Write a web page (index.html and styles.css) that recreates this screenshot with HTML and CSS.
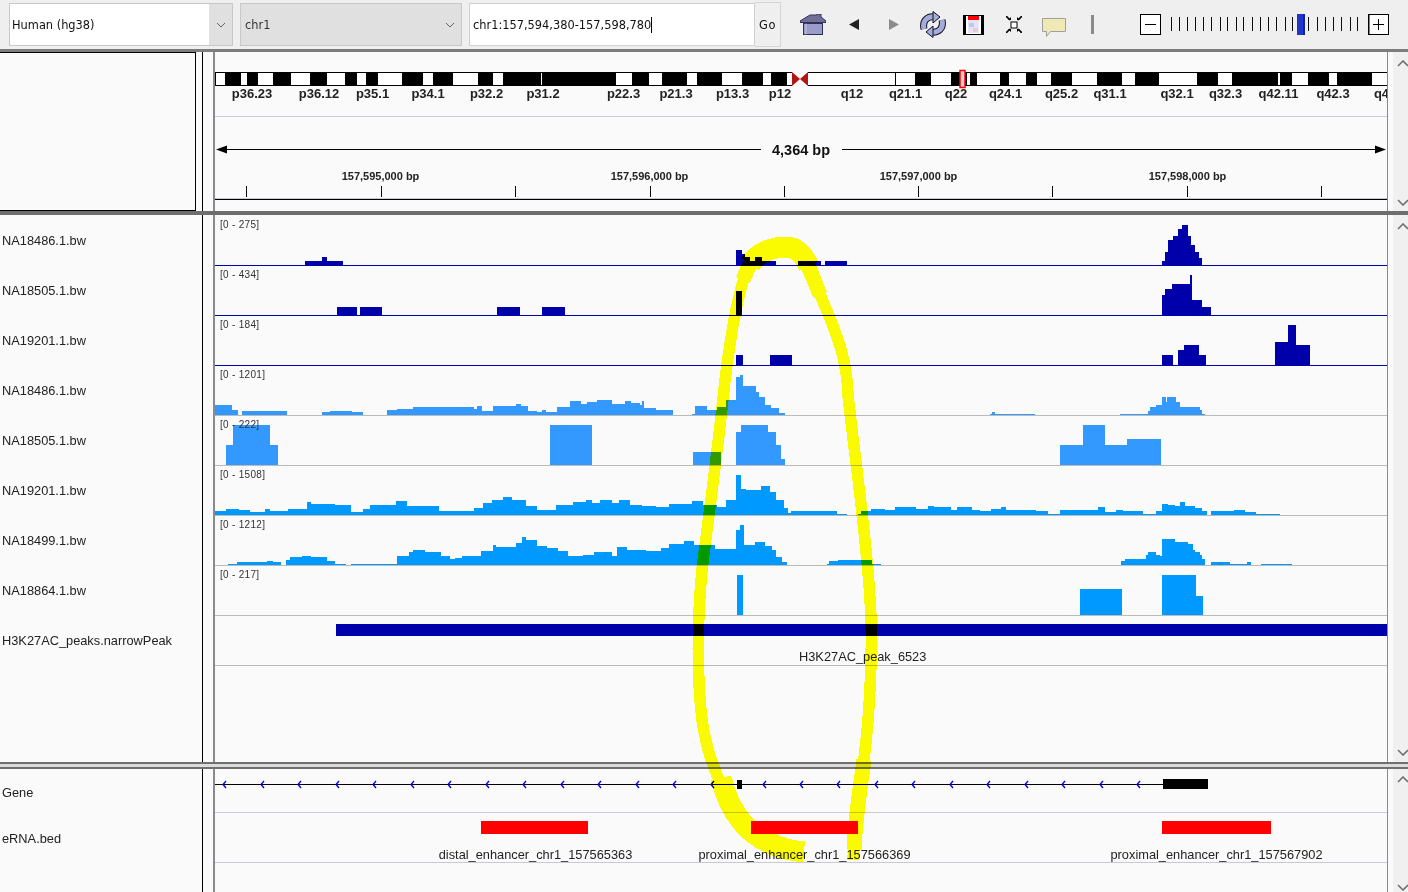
FILE: index.html
```html
<!DOCTYPE html>
<html lang="en">
<head>
    <meta charset="UTF-8">
    <title>IGV</title>
    <link rel="stylesheet" href="styles.css">
</head>
<body>
    <div class="toolbar">
        <div class="combo genome"><span class="combo-text">Human (hg38)</span><span class="combo-arrow"><svg width="10" height="6" viewBox="0 0 10 6"><path d="M1 1L5 5L9 1" class="caret"/></svg></span></div>
        <div class="combo chrom"><span class="combo-text">chr1</span><span class="combo-arrow"><svg width="10" height="6" viewBox="0 0 10 6"><path d="M1 1L5 5L9 1" class="caret"/></svg></span></div>
        <div class="locus"><span class="locus-text">chr1:157,594,380-157,598,780</span></div>
        <div class="go">Go</div>

        <svg class="icon home" width="26" height="21" viewBox="0 0 26 21">
            <path d="M0 7L10 1H17V0H21V3L26 7V8.500H0Z" fill="#6f6f98" stroke="#33335a"/>
            <rect x="3.500" y="9.500" width="19" height="11" fill="#9c9cc8" stroke="#2e2e56"/>
            <path d="M6 9.500V20.500" stroke="#c4c4e0"/>
        </svg>
        <svg class="icon back" width="10" height="11" viewBox="0 0 10 11"><path d="M0 5.500L10 0V11Z" fill="#222"/></svg>
        <svg class="icon forward" width="10" height="11" viewBox="0 0 10 11"><path d="M10 5.500L0 0V11Z" fill="#8c8c8c"/></svg>
        <svg class="icon refresh" width="26" height="27" viewBox="0 0 26 27">
            <path d="M4 18C2 9 8 5 15 6" fill="none" stroke="#112" stroke-width="7"/>
            <path d="M22 9C24 18 18 22 11 21" fill="none" stroke="#112" stroke-width="7"/>
            <path d="M4 18C2 9 8 5 15 6" fill="none" stroke="#a4acdc" stroke-width="5"/>
            <path d="M22 9C24 18 18 22 11 21" fill="none" stroke="#a4acdc" stroke-width="5"/>
            <path d="M13 .5L20 6L13 12Z" fill="#a4acdc" stroke="#112"/>
            <path d="M13 15L6 21L13 26.500Z" fill="#a4acdc" stroke="#112"/>
        </svg>
        <svg class="icon region" width="21" height="20" viewBox="0 0 21 20">
            <rect width="21" height="20" fill="#000"/>
            <rect x="3" y="1" width="15" height="18" fill="#fff"/>
            <rect x="5" y="5" width="11" height="13" fill="#e4e4f6"/>
            <rect x="6" y="8" width="5" height="4" fill="#c0c6f0"/>
            <rect x="10" y="13" width="5" height="4" fill="#f0c8d4"/>
            <rect x="5" y="1" width="11" height="4" fill="#f00"/>
        </svg>
        <svg class="icon fit" width="16" height="17" viewBox="0 0 16 17">
            <rect x="5" y="6" width="6" height="6" fill="#fff" stroke="#000"/>
            <path d="M0 0L4 4M16 0L12 4M0 17L4 13M16 17L12 13" stroke="#000" stroke-width="1.600"/>
            <path d="M2 4H5V1ZM14 4H11V1ZM2 13H5V16ZM14 13H11V16Z" fill="#000"/>
        </svg>
        <svg class="icon bubble" width="24" height="19" viewBox="0 0 24 19">
            <path d="M.5 .5H23.500V13.500H8.500L4.500 18.500V13.500H.5Z" fill="#efe9b5" stroke="#a0a0a0"/>
        </svg>
        <span class="sep"></span>

        <svg class="zoom-btn" width="21" height="21" viewBox="0 0 21 21">
            <rect x=".5" y=".5" width="20" height="20" fill="#fff" stroke="#000"/>
            <path d="M5 10.500H16" stroke="#000"/>
        </svg>
        <svg class="slider" width="207" height="21" viewBox="1161 0 207 21">
            <path d="M1171.500 3V17M1179.500 3V17M1187.500 3V17M1195.500 3V17M1203.500 3V17M1211.500 3V17M1220.500 3V17M1227.500 3V17M1236.500 3V17M1243.500 3V17M1252.500 3V17M1260.500 3V17M1268.500 3V17M1276.500 3V17M1285.500 3V17M1292.500 3V17M1308.500 3V17M1317.500 3V17M1325.500 3V17M1333.500 3V17M1341.500 3V17M1350.500 3V17M1357.500 3V17" stroke="#111"/>
            <rect x="1297" y="0" width="8" height="21" fill="#1f35cc"/>
            <rect x="1303" y="0" width="2" height="21" fill="#14229a"/>
        </svg>
        <svg class="zoom-btn" width="21" height="21" viewBox="0 0 21 21">
            <rect x="1" y=".5" width="19.500" height="20" fill="#fff" stroke="#000"/>
            <path d="M0 0V21" stroke="#000" stroke-width="2"/>
            <path d="M5 10.500H16M10.500 5V16" stroke="#000"/>
        </svg>
    </div>

    <div class="panel top-panel">
        <div class="names"><div class="name-box"></div></div>
        <div class="gutter"></div>
        <div class="data">
            <svg class="cyto" width="1172" height="64" viewBox="215 52 1172 64">
                <rect x="215" y="72" width="577" height="14" fill="#000"/>
                <rect x="808" y="72" width="579" height="14" fill="#000"/>
                <g fill="#fff">
                    <rect x="216" y="73" width="9" height="12"/><rect x="241" y="73" width="6" height="12"/>
                    <rect x="258" y="73" width="15" height="12"/><rect x="291" y="73" width="19" height="12"/>
                    <rect x="327" y="73" width="18" height="12"/><rect x="357" y="73" width="9" height="12"/>
                    <rect x="378" y="73" width="24" height="12"/><rect x="423" y="73" width="10" height="12"/>
                    <rect x="453" y="73" width="25" height="12"/><rect x="493" y="73" width="10" height="12"/>
                    <rect x="541" y="73" width="1" height="12"/><rect x="616" y="73" width="16" height="12"/>
                    <rect x="649" y="73" width="13" height="12"/><rect x="687" y="73" width="10" height="12"/>
                    <rect x="722" y="73" width="20" height="12"/><rect x="763" y="73" width="8" height="12"/>
                    <rect x="787" y="73" width="5" height="12"/>
                    <rect x="808" y="73" width="87" height="12"/><rect x="896" y="73" width="19" height="12"/>
                    <rect x="931" y="73" width="20" height="12"/><rect x="967" y="73" width="3" height="12"/>
                    <rect x="977" y="73" width="23" height="12"/><rect x="1009" y="73" width="17" height="12"/>
                    <rect x="1037" y="73" width="14" height="12"/><rect x="1072" y="73" width="25" height="12"/>
                    <rect x="1122" y="73" width="13" height="12"/><rect x="1159" y="73" width="38" height="12"/>
                    <rect x="1218" y="73" width="14" height="12"/><rect x="1278" y="73" width="2" height="12"/>
                    <rect x="1292" y="73" width="16" height="12"/><rect x="1329" y="73" width="8" height="12"/>
                    <rect x="1372" y="73" width="15" height="12"/>
                </g>
                <path d="M792 72L800 79L792 86Z" fill="#b41414"/>
                <path d="M808 72L800 79L808 86Z" fill="#b41414"/>
                <rect x="960" y="70.500" width="5" height="17" fill="#f6d0d0" stroke="#f00" stroke-width="1.500"/>
                <g class="cyto-label">
                    <text x="252" y="98">p36.23</text><text x="319" y="98">p36.12</text><text x="372.500" y="98">p35.1</text>
                    <text x="428" y="98">p34.1</text><text x="486.500" y="98">p32.2</text><text x="543" y="98">p31.2</text>
                    <text x="623.500" y="98">p22.3</text><text x="676" y="98">p21.3</text><text x="732.500" y="98">p13.3</text>
                    <text x="780" y="98">p12</text><text x="852" y="98">q12</text><text x="905.500" y="98">q21.1</text>
                    <text x="956" y="98">q22</text><text x="1005.500" y="98">q24.1</text><text x="1061.500" y="98">q25.2</text>
                    <text x="1110" y="98">q31.1</text><text x="1177" y="98">q32.1</text><text x="1225.500" y="98">q32.3</text>
                    <text x="1278.500" y="98">q42.11</text><text x="1333" y="98">q42.3</text><text x="1381.500" y="98">q4</text>
                </g>
            </svg>
            <svg class="ruler" width="1172" height="81" viewBox="215 117 1172 81">
                <path d="M226 149.500H761M842 149.500H1376" stroke="#000"/>
                <path d="M216 149.500L227 145.500V153.500Z" fill="#000"/>
                <path d="M1386 149.500L1375 145.500V153.500Z" fill="#000"/>
                <text class="span-label" x="801" y="155">4,364 bp</text>
                <g class="tick-label">
                    <text x="380.500" y="180">157,595,000 bp</text><text x="649.500" y="180">157,596,000 bp</text>
                    <text x="918.500" y="180">157,597,000 bp</text><text x="1187.500" y="180">157,598,000 bp</text>
                </g>
                <path d="M246.500 186V197M381.500 186V197M515.500 186V197M650.500 186V197M784.500 186V197M918.500 186V197M1052.500 186V197M1187.500 186V197M1321.500 186V197" stroke="#000"/>
            </svg>
            <div class="ruler-foot"></div>
        </div>
        <div class="scroll">
            <svg class="chev" width="12" height="7" viewBox="0 0 12 7"><path d="M1 6L6 1L11 6"/></svg>
            <svg class="chev" width="12" height="7" viewBox="0 0 12 7"><path d="M1 1L6 6L11 1"/></svg>
        </div>
    </div>

    <div class="hsplit"></div>

    <div class="panel mid-panel">
        <div class="names">
            <div class="name">NA18486.1.bw</div>
            <div class="name">NA18505.1.bw</div>
            <div class="name">NA19201.1.bw</div>
            <div class="name">NA18486.1.bw</div>
            <div class="name">NA18505.1.bw</div>
            <div class="name">NA19201.1.bw</div>
            <div class="name">NA18499.1.bw</div>
            <div class="name">NA18864.1.bw</div>
            <div class="name">H3K27AC_peaks.narrowPeak</div>
        </div>
        <div class="gutter"></div>
        <div class="data">
            <div class="track navy">
                <span class="range">[0 - 275]</span>
                <svg width="1172" height="49" viewBox="215 216 1172 49">
                    <path class="dark" d="M305 265V261H322V257H327V261H343V265ZM736 265V250H742V254H745V257H750V261H755V257H762V261H776V265ZM798 265V261H821V265ZM825 265V261H847V265ZM1162 265V261H1165V252H1168V240H1173V236H1178V229H1182V225H1188V236H1191V245H1195V252H1199V258H1202V265Z"/>
                </svg>
            </div>
            <div class="track navy">
                <span class="range">[0 - 434]</span>
                <svg width="1172" height="49" viewBox="215 266 1172 49">
                    <path class="dark" d="M337 315V307H357V315ZM360 315V307H382V315ZM497 315V307H520V315ZM542 315V307H565V315ZM736 315V291H742V315ZM1162 315V295H1165V289H1172V284H1190V275H1192V300H1202V307H1211V315Z"/>
                </svg>
            </div>
            <div class="track navy">
                <span class="range">[0 - 184]</span>
                <svg width="1172" height="49" viewBox="215 316 1172 49">
                    <path class="dark" d="M736 365V355H743V365ZM770 365V355H792V365ZM1162 365V355H1173V365ZM1178 365V350H1184V345H1199V355H1206V365ZM1275 365V342H1288V325H1296V345H1310V365Z"/>
                </svg>
            </div>
            <div class="track">
                <span class="range">[0 - 1201]</span>
                <svg width="1172" height="49" viewBox="215 366 1172 49">
                    <path class="sky" d="M215 415V405H232V410H238V415ZM242 415V411H287V415ZM322 415V412H330V411H352V412H363V415ZM387 415V410H397V409H413V407H432V407H474V409H477V406H482V411H493V406H516V404H521V406H528V411H537V412H542V410H546V412H552V412H557V407H570V401H581V404H587V402H597V400H612V404H625V401H631V403H640V405H642V401H644V408H656V410H673V415ZM692 415V414H695V406H707V410H717V407H726V400H736V377H740V375H743V386H756V392H759V397H765V405H771V408H779V413H785V415ZM990 415V414H992V412H995V414H1035V415ZM1120 415V414H1148V411H1150V407H1156V405H1162V397H1166V402H1167V397H1176V402H1180V407H1200V410H1202V414H1205V415Z"/>
                </svg>
            </div>
            <div class="track">
                <span class="range">[0 - 222]</span>
                <svg width="1172" height="49" viewBox="215 416 1172 49">
                    <path class="sky" d="M226 465V445H233V425H270V445H278V465ZM550 465V425H592V465ZM693 465V452H721V465ZM736 465V432H741V425H768V432H776V445H781V459H785V465ZM1060 465V445H1083V425H1105V445H1127V439H1161V465Z"/>
                </svg>
            </div>
            <div class="track">
                <span class="range">[0 - 1508]</span>
                <svg width="1172" height="49" viewBox="215 466 1172 49">
                    <path class="blue" d="M215 515V511H226V509H239V510H250V512H265V509H270V511H288V509H307V502H311V504H335V505H351V512H363V509H370V505H396V501H407V506H439V511H474V508H483V503H492V500H503V497H512V500H526V506H537V510H556V505H573V502H586V500H592V503H600V500H612V503H619V500H630V505H642V506H656V507H669V504H692V501H703V505H717V507H726V500H736V475H741V489H746V490H761V486H770V492H776V500H784V508H788V513H791V511H811V511H837V514H847V515ZM858 515V514H861V511H871V509H885V510H895V507H901V507H916V509H928V506H934V507H951V510H957V507H972V510H980V511H991V509H1001V507H1006V510H1036V511H1048V514H1060V510H1098V507H1105V512H1116V510H1123V511H1143V514H1156V511H1162V504H1168V505H1175V506H1180V502H1185V506H1195V508H1202V511H1207V515ZM1211 515V511H1234V510H1245V512H1256V514H1280V515Z"/>
                </svg>
            </div>
            <div class="track">
                <span class="range">[0 - 1212]</span>
                <svg width="1172" height="49" viewBox="215 516 1172 49">
                    <path class="blue" d="M228 565V564H237V562H267V561H273V562H281V565ZM286 565V560H290V557H302V556H311V557H327V561H335V564H346V565ZM351 565V564H380V564H397V561H397V556H409V552H413V550H425V552H441V556H450V559H455V558H462V556H481V551H493V545H496V547H516V543H522V537H526V540H537V546H547V548H558V551H568V556H583V555H594V552H612V556H617V547H627V550H646V551H661V548H669V544H684V541H694V545H715V549H736V530H740V525H744V545H755V542H765V546H772V550H776V557H782V562H787V565ZM827 565V564H829V561H838V560H872V564H881V565ZM1121 565V561H1125V559H1146V555H1148V552H1156V555H1160V556H1162V539H1175V542H1188V544H1193V550H1195V552H1200V555H1202V559H1205V565ZM1211 565V562H1230V564H1247V562H1251V565ZM1261 565V564H1292V565Z"/>
                </svg>
            </div>
            <div class="track">
                <span class="range">[0 - 217]</span>
                <svg width="1172" height="49" viewBox="215 566 1172 49">
                    <path class="blue" d="M737 615V575H743V615ZM1080 615V589H1122V615ZM1162 615V575H1196V596H1203V615Z"/>
                </svg>
            </div>
            <div class="track peak">
                <div class="peak-bar"></div>
                <div class="feature-label">H3K27AC_peak_6523</div>
            </div>
        </div>
        <div class="scroll">
            <svg class="chev" width="12" height="7" viewBox="0 0 12 7"><path d="M1 6L6 1L11 6"/></svg>
            <svg class="chev" width="12" height="7" viewBox="0 0 12 7"><path d="M1 1L6 6L11 1"/></svg>
        </div>
    </div>

    <div class="hsplit double"></div>

    <div class="panel bottom-panel">
        <div class="names">
            <div class="name gene-name">Gene</div>
            <div class="name">eRNA.bed</div>
        </div>
        <div class="gutter"></div>
        <div class="data">
            <div class="track gene-track">
                <svg width="1172" height="42" viewBox="215 770 1172 42">
                    <path d="M215 784.500H1163" stroke="#000"/>
                    <path class="strand" d="M226 781L223 784.500L226 788M264 781L261 784.500L264 788M301 781L298 784.500L301 788M339 781L336 784.500L339 788M376 781L373 784.500L376 788M414 781L411 784.500L414 788M451 781L448 784.500L451 788M489 781L486 784.500L489 788M526 781L523 784.500L526 788M564 781L561 784.500L564 788M601 781L598 784.500L601 788M639 781L636 784.500L639 788M676 781L673 784.500L676 788M714 781L711 784.500L714 788M766 781L763 784.500L766 788M803 781L800 784.500L803 788M840 781L837 784.500L840 788M878 781L875 784.500L878 788M915 781L912 784.500L915 788M953 781L950 784.500L953 788M990 781L987 784.500L990 788M1028 781L1025 784.500L1028 788M1065 781L1062 784.500L1065 788M1103 781L1100 784.500L1103 788M1140 781L1137 784.500L1140 788"/>
                    <rect x="737" y="780" width="5" height="9" fill="#000"/>
                    <rect x="1163" y="779" width="45" height="10" fill="#000"/>
                </svg>
            </div>
            <div class="track bed-track">
                <svg width="1172" height="49" viewBox="215 813 1172 49">
                    <rect x="481" y="821" width="107" height="13" fill="#f00"/>
                    <rect x="751" y="821" width="107" height="13" fill="#f00"/>
                    <rect x="1162" y="821" width="109" height="13" fill="#f00"/>
                    <g class="bed-label">
                        <text x="535.500" y="859">distal_enhancer_chr1_157565363</text>
                        <text x="804.500" y="859">proximal_enhancer_chr1_157566369</text>
                        <text x="1216.500" y="859">proximal_enhancer_chr1_157567902</text>
                    </g>
                </svg>
            </div>
        </div>
        <div class="scroll">
            <svg class="chev" width="12" height="7" viewBox="0 0 12 7"><path d="M1 6L6 1L11 6"/></svg>
            <svg class="chev" width="12" height="7" viewBox="0 0 12 7"><path d="M1 1L6 6L11 1"/></svg>
        </div>
    </div>

    <!-- hand drawn highlight, sits on top of everything -->
    <svg class="scribble" width="1408" height="892" viewBox="0 0 1408 892">
        <path class="pen" d="M853 860C855 820 864 770 868 720C871 680 873 640 870 600C867 540 855 460 848 395C847 350 830 320 812 275C803 252 795 247 786 247C770 247 755 255 748 268C738 290 730 340 725 380C718 450 708 520 702 570C697 620 697 680 702 720C708 760 718 775 725 795"/>
        <path class="pen mid" d="M820 295L812 275C803 252 795 247 786 247C770 247 755 255 748 268L743 280"/>
        <path class="pen thick" d="M809 266C802 252 795 247 786 247C770 247 757 254 750 264"/>
        <path class="pen thick" d="M721 778C730 815 750 835 770 843C780 848 792 851 804 852"/>
        <path class="pen mid" d="M854 850C855 820 860 790 864 760"/>
    </svg>
</body>
</html>
```

FILE: styles.css
```css
* {
    box-sizing: border-box;
}

body {
    margin: 0;
    width: 1408px;
    height: 892px;
    overflow: hidden;
    position: relative;
    background-color: #fafafa;
    font-family: "Liberation Sans", Arial, sans-serif;
    color: #222;
}

svg {
    display: block;
}

/* toolbar */
.toolbar {
    display: flex;
    align-items: center;
    height: 52px;
    padding-left: 9px;
    background-color: #efefef;
    border-bottom: 3px solid #7d7d7d;
    font-family: "DejaVu Sans", sans-serif;
    font-size: 11.4px;
    color: #111;
}

.combo {
    display: flex;
    align-items: center;
    height: 43px;
    background-color: #e0e0e0;
    border: 1px solid #c8c8c8;
    margin-right: 7px;
}

.genome {
    width: 224px;
}

.chrom {
    width: 222px;
    color: #333;
}

.combo-text {
    flex: 1;
    align-self: stretch;
    display: flex;
    align-items: center;
    padding-left: 4px;
}

.genome .combo-text {
    background-color: #fff;
    padding-left: 2px;
}

.combo-arrow {
    width: 23px;
    display: flex;
    justify-content: center;
}

.caret {
    fill: none;
    stroke: #666;
}

.locus {
    display: flex;
    align-items: center;
    width: 286px;
    height: 43px;
    padding-left: 3px;
    background-color: #fff;
    border: 1px solid #d0d0d0;
}

.locus-text {
    border-right: 1px solid #000;
    line-height: 16px;
}

.go {
    width: 26px;
    height: 45px;
    line-height: 45px;
    text-align: center;
    letter-spacing: 0.5px;
    border: 1px solid #d4d4d4;
    border-left: none;
}

.icon {
    flex: none;
}

.home { margin-left: 19px; }
.back { margin-left: 23px; }
.forward { margin-left: 30px; }
.refresh { margin-left: 21px; }
.region { margin-left: 17px; }
.fit { margin-left: 22px; }
.bubble { margin-left: 20px; margin-top: 6px; }

.sep {
    width: 3px;
    height: 19px;
    margin-left: 25px;
    margin-right: 46px;
    background-color: #8a8a8a;
}

/* panels */
.panel {
    display: flex;
}

.top-panel {
    height: 159px;
}

.mid-panel {
    height: 547px;
}

.bottom-panel {
    height: 123px;
}

.names {
    width: 203px;
    flex: none;
    border-right: 1px solid #000;
}

.name-box {
    width: 196px;
    height: 100%;
    border: 1px solid #000;
    border-left: none;
}

.gutter {
    width: 10px;
    flex: none;
}

.data {
    width: 1175px;
    flex: none;
    border-left: 2px solid #8a8a8a;
    border-right: 1px solid #8a8a8a;
}

.scroll {
    width: 20px;
    flex: none;
    display: flex;
    flex-direction: column;
    justify-content: space-between;
    align-items: center;
    padding-left: 10px;
    background: linear-gradient(to right, #fafafa 5px, #f0f0f0 5px);
}

.chev {
    fill: none;
    stroke: #707070;
    stroke-width: 1.6;
}

.top-panel .scroll {
    padding-top: 8px;
    padding-bottom: 5px;
}

.mid-panel .scroll {
    padding-top: 8px;
    padding-bottom: 6px;
}

.bottom-panel .scroll {
    padding-top: 7px;
    padding-bottom: 1px;
}

.hsplit {
    height: 4px;
    background-color: #6e6e6e;
}

.hsplit.double {
    height: 7px;
    background: linear-gradient(to bottom, #707070 2px, #dcdcdc 2px, #dcdcdc 5px, #707070 5px);
}

/* top panel contents */
.top-panel .data {
    display: flex;
    flex-direction: column;
    background: linear-gradient(to bottom, transparent 64px, #c8c8d8 64px, #c8c8d8 65px, transparent 65px, transparent 146px, #c8c8d8 146px, #c8c8d8 147px, transparent 147px);
}

.cyto-label text {
    font-size: 13px;
    font-weight: bold;
    text-anchor: middle;
    fill: #222;
}

.ruler {
    margin-top: 1px;
    flex: none;
}

.span-label {
    font-size: 14.5px;
    font-weight: bold;
    text-anchor: middle;
    fill: #111;
}

.tick-label text {
    font-size: 11px;
    font-weight: bold;
    text-anchor: middle;
    fill: #222;
}

.ruler-foot {
    flex: 1;
    margin-top: 1px;
    border-top: 1px solid #000;
}

/* tracks */
.mid-panel .names,
.bottom-panel .names {
    padding-left: 2px;
    font-size: 12.8px;
}

.bottom-panel .names {
    padding-top: 1px;
}

.name {
    display: flex;
    align-items: center;
    height: 50px;
}

.gene-name {
    height: 43px;
    padding-top: 1px;
}

.mid-panel .data,
.bottom-panel .data {
    padding-top: 1px;
}

.track {
    position: relative;
    height: 50px;
    border-bottom: 1px solid #bbb;
}

.track.navy {
    border-bottom-color: #0000aa;
}

.range {
    position: absolute;
    left: 5px;
    top: 3px;
    z-index: 1;
    font-size: 10px;
    letter-spacing: 0.3px;
    color: #333;
}

.dark { fill: #0000aa; }
.sky { fill: #3399ff; }
.blue { fill: #0099ff; }

.peak {
    padding-top: 8px;
}

.peak-bar {
    height: 12px;
    margin-left: 121px;
    background-color: #0000aa;
}

.feature-label {
    margin: 13px 0 0 584px;
    font-size: 12.8px;
    line-height: 15px;
    white-space: nowrap;
}

.gene-track {
    height: 43px;
    border-bottom-color: #c8c8d8;
}

.bed-track {
    border-bottom-color: #c8c8d8;
}

.strand {
    fill: none;
    stroke: #0000ee;
    stroke-width: 1.3;
}

.bed-label text {
    font-size: 12.8px;
    text-anchor: middle;
    fill: #222;
}

/* yellow marker, multiplied so the tracks still show through */
.scribble {
    position: absolute;
    left: 0;
    top: 0;
    pointer-events: none;
    mix-blend-mode: multiply;
}

.pen {
    fill: none;
    stroke: #ffff00;
    stroke-width: 11.5;
    shape-rendering: crispEdges;
}

.pen.mid {
    stroke-width: 15;
}

.pen.thick {
    stroke-width: 21;
}
```
